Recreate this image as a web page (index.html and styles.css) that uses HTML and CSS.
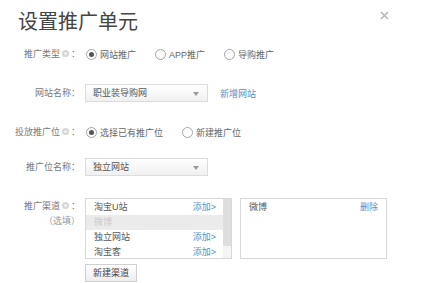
FILE: index.html
```html
<!DOCTYPE html>
<html lang="zh-CN">
<head>
    <meta charset="UTF-8">
    <title>设置推广单元</title>
    <link rel="stylesheet" href="styles.css">
</head>
<body>
<div class="dialog">
    <div class="head">
        <h1 class="title">设置推广单元</h1>
        <a class="close"><svg width="9" height="9" viewBox="0 0 9 9"><path d="M1 1L8 8M8 1L1 8" stroke="#b8b8b8" stroke-width="1.6"/></svg></a>
    </div>

    <div class="row row-1">
        <div class="label">推广类型<i class="help"></i>：</div>
        <div class="field">
            <label class="opt"><span class="radio checked"></span>网站推广</label>
            <label class="opt"><span class="radio"></span>APP推广</label>
            <label class="opt"><span class="radio"></span>导购推广</label>
        </div>
    </div>

    <div class="row">
        <div class="label">网站名称：</div>
        <div class="field">
            <div class="select">职业装导购网<b class="arrow"></b></div>
            <a class="link add-site">新增网站</a>
        </div>
    </div>

    <div class="row">
        <div class="label">投放推广位<i class="help"></i>：</div>
        <div class="field">
            <label class="opt"><span class="radio checked"></span>选择已有推广位</label>
            <label class="opt"><span class="radio"></span>新建推广位</label>
        </div>
    </div>

    <div class="row row-4">
        <div class="label">推广位名称：</div>
        <div class="field">
            <div class="select">独立网站<b class="arrow"></b></div>
        </div>
    </div>

    <div class="row row-5">
        <div class="label">
            推广渠道<i class="help"></i>：
            <div class="sub">（选填）</div>
        </div>
        <div class="field col">
            <div class="boxes">
                <div class="box box-left">
                    <ul class="items">
                        <li><span>淘宝U站</span><a class="link">添加&gt;</a></li>
                        <li class="disabled"><span>微博</span></li>
                        <li><span>独立网站</span><a class="link">添加&gt;</a></li>
                        <li><span>淘宝客</span><a class="link">添加&gt;</a></li>
                    </ul>
                    <div class="scroll"><div class="thumb"></div></div>
                </div>
                <div class="box box-right">
                    <ul class="items">
                        <li><span>微博</span><a class="link">删除</a></li>
                    </ul>
                </div>
            </div>
            <a class="btn">新建渠道</a>
        </div>
    </div>
</div>
</body>
</html>
```

FILE: styles.css
```css
html, body {
    margin: 0;
    padding: 0;
    background: #fff;
}
body {
    font-family: "Liberation Sans", "Noto Sans CJK SC", sans-serif;
    font-size: 9px;
    color: #666;
}
ul {
    margin: 0;
    padding: 0;
    list-style: none;
}
.dialog {
    width: 432px;
    height: 283px;
    overflow: hidden;
}
.head {
    display: flex;
    justify-content: space-between;
    align-items: flex-start;
    padding: 10px 43px 0 18px;
}
.title {
    margin: 0;
    font-size: 20px;
    line-height: 24px;
    font-weight: normal;
    color: #444;
}
.close {
    display: block;
    width: 9px;
    height: 9px;
    margin-top: 1px;
}
.close svg {
    display: block;
}
.row {
    display: flex;
    align-items: center;
    height: 18px;
    margin-top: 21px;
}
.row-1 {
    margin-top: 11px;
}
.row-4 {
    margin-top: 17px;
}
.row-5 {
    align-items: flex-start;
    height: auto;
    margin-top: 22px;
}
.label {
    width: 80px;
    flex: none;
    text-align: right;
    color: #7a7a7a;
    line-height: 18px;
    white-space: nowrap;
}
.row-5 .label {
    line-height: 15px;
    padding-top: 1px;
}
.sub {
    color: #999;
}
/* 问号提示图标 */
.help {
    position: relative;
    display: inline-block;
    width: 7px;
    height: 7px;
    margin: 0 2px;
    border-radius: 50%;
    background: #d6d6d6;
    vertical-align: middle;
    margin-top: -2px;
}
.help::after {
    content: "";
    position: absolute;
    left: 2px;
    top: 2px;
    width: 3px;
    height: 3px;
    border-radius: 50%;
    background: #f2f2f2;
}
.field {
    display: flex;
    align-items: center;
    margin-left: 5px;
}
.field.col {
    flex-direction: column;
    align-items: flex-start;
}
.opt {
    display: flex;
    align-items: center;
    margin-right: 18px;
    color: #666;
}
.radio {
    position: relative;
    width: 9px;
    height: 9px;
    margin: 0 3px 0 1px;
    border: 1px solid #a5a5a5;
    border-radius: 50%;
    background: #fff;
}
.radio.checked::after {
    content: "";
    position: absolute;
    left: 2px;
    top: 2px;
    width: 5px;
    height: 5px;
    border-radius: 50%;
    background: #555;
}
.select {
    position: relative;
    box-sizing: border-box;
    width: 123px;
    height: 18px;
    padding-left: 7px;
    border: 1px solid #dcdcdc;
    background: linear-gradient(#fff, #f0f0f0);
    color: #555;
    line-height: 16px;
}
.arrow {
    position: absolute;
    right: 8px;
    top: 7px;
    width: 0;
    height: 0;
    border-left: 3px solid transparent;
    border-right: 3px solid transparent;
    border-top: 4px solid #999;
}
.link {
    color: #5790c6;
}
.add-site {
    margin-left: 12px;
}
.boxes {
    display: flex;
    gap: 8px;
}
.box {
    position: relative;
    box-sizing: border-box;
    width: 147px;
    height: 61px;
    border: 1px solid #d8d8d8;
    background: #fff;
}
.items {
    padding-top: 1px;
}
.box-left .items {
    margin-right: 8px;
}
.items li {
    display: flex;
    justify-content: space-between;
    height: 15px;
    line-height: 15px;
    padding: 0 7px 0 8px;
    color: #555;
}
.items li.disabled {
    background: #ebebeb;
    color: #cacaca;
}
.box-right .items li {
    padding-right: 8px;
}
.scroll {
    position: absolute;
    right: 0;
    top: 0;
    bottom: 0;
    width: 8px;
    background: #f4f4f4;
}
.thumb {
    height: 47px;
    background: #dedede;
}
.btn {
    display: block;
    box-sizing: border-box;
    width: 52px;
    height: 18px;
    margin-top: 5px;
    border: 1px solid #d0d0d0;
    background: linear-gradient(#fff, #ededed);
    color: #444;
    text-align: center;
    line-height: 16px;
}
```
